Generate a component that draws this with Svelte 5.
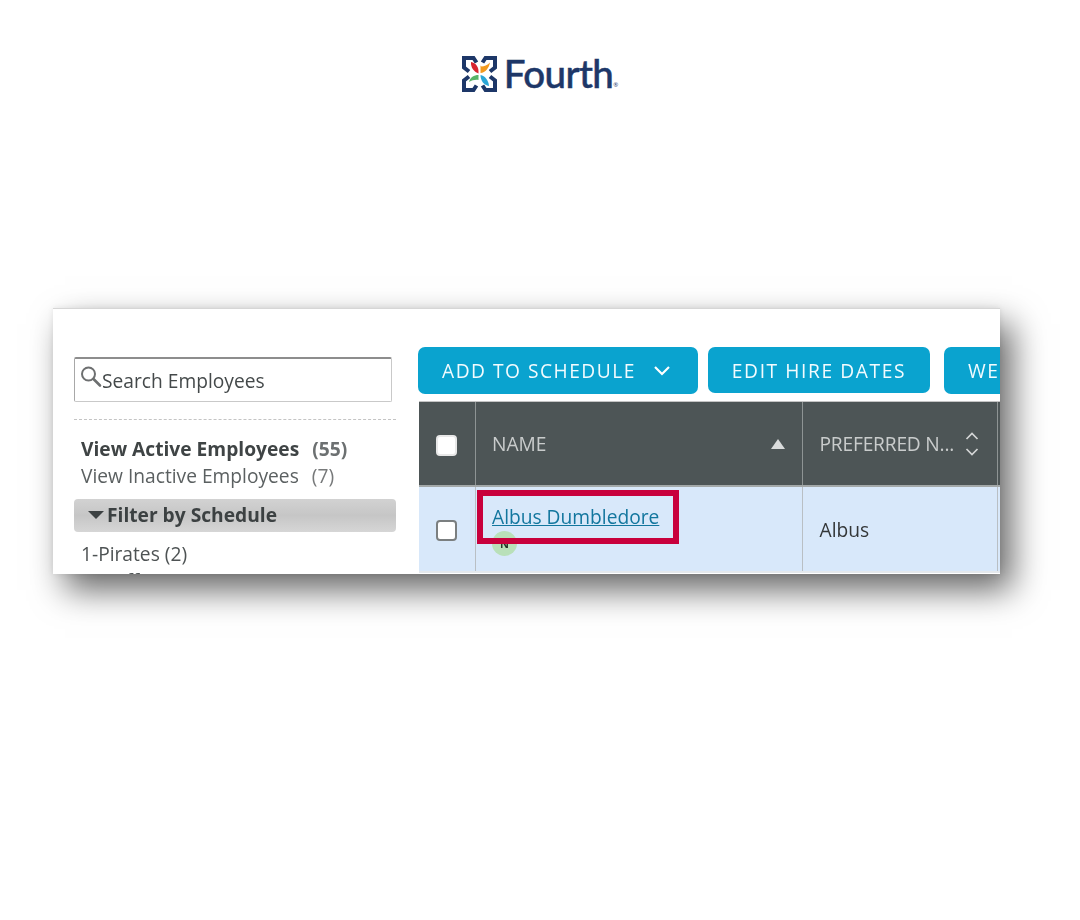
<script>
  const sideLinks = [
    { label: 'View Active Employees', count: 55, active: true },
    { label: 'View Inactive Employees', count: 7, active: false }
  ];
</script>

<div class="page">
  <header class="brand">
    <svg class="mark" width="35" height="36" viewBox="0 0 35 36" aria-hidden="true">
      <g fill="none" stroke="#1d3768" stroke-width="4" stroke-linejoin="miter" stroke-linecap="butt">
        <path d="M14.500 6.500 L11.500 2 H2 V11.500 L7 15.500" />
        <path d="M20.500 6.500 L23.500 2 H33 V11.500 L28 15.500" />
        <path d="M14.500 29.500 L11.500 34 H2 V24.500 L7 20.500" />
        <path d="M20.500 29.500 L23.500 34 H33 V24.500 L28 20.500" />
      </g>
      <path d="M9 6 C14 7 17 11 16.500 17.500 C12.500 16 8.500 12 9 6Z" fill="#d8232f" />
      <path d="M28 6.500 C27 12 23.500 16.500 18.500 17 L18.500 9.500 L19.500 10.500 C22 10.500 25.500 9 28 6.500Z" fill="#f39a1e" />
      <path d="M7 26 C8 21.500 12 19 16.500 19 L16.500 24 C13 23.500 10 24.500 7 26Z" fill="#58b368" />
      <path d="M27 30 C22 29 18.500 25 18.500 19 C23 20 26.500 24 27 30Z" fill="#2aa6d6" />
    </svg>
    <span class="word">Fourth</span><span class="reg">®</span>
  </header>

  <section class="shot">
    <div class="inner">
      <aside class="side">
        <div class="search">
          <svg width="24" height="24" viewBox="0 0 24 24" aria-hidden="true">
            <circle cx="9.500" cy="9" r="6.500" fill="none" stroke="#6d6f70" stroke-width="2" />
            <path d="M14.500 14 L21 20.500" stroke="#6d6f70" stroke-width="2.600" stroke-linecap="round" />
          </svg>
          <span>Search Employees</span>
        </div>
        <div class="links">
          {#each sideLinks as link}
            <div class="link" class:active={link.active}>
              <span class="name">{link.label}</span><span class="count">({link.count})</span>
            </div>
          {/each}
        </div>
        <div class="filter">
          <span class="caret"></span>
          <span>Filter by Schedule</span>
        </div>
        <div class="groups">
          <div>1-Pirates (2)</div>
          <div>2-Staff (3)</div>
        </div>
      </aside>

      <div class="main">
        <div class="toolbar">
          <button class="add">
            ADD TO SCHEDULE
            <svg width="18" height="11" viewBox="0 0 18 11" aria-hidden="true">
              <path d="M2 2 L9 9 L16 2" fill="none" stroke="#fff" stroke-width="2.200" />
            </svg>
          </button>
          <button class="edit">EDIT HIRE DATES</button>
          <button class="web">WEB ACCESS</button>
        </div>

        <div class="table">
          <div class="row head">
            <div class="cell check"><span class="box white"></span></div>
            <div class="cell name">
              <span>NAME</span>
              <svg width="14" height="10" viewBox="0 0 14 10" aria-hidden="true"><path d="M7 0 L14 10 H0Z" fill="#d9dbdb" /></svg>
            </div>
            <div class="cell pref">
              <span>PREFERRED N...</span>
              <svg width="14" height="24" viewBox="0 0 14 24" aria-hidden="true">
                <path d="M1.500 7 L7 1.500 L12.500 7 M1.500 17 L7 22.500 L12.500 17" fill="none" stroke="#d4d6d6" stroke-width="1.700" />
              </svg>
            </div>
            <div class="cell rest"></div>
          </div>
          <div class="row body">
            <div class="cell check"><span class="box"></span></div>
            <div class="cell name">
              <a href="#albus">Albus Dumbledore</a>
              <span class="avatar">N</span>
              <span class="highlight"></span>
            </div>
            <div class="cell pref">Albus</div>
            <div class="cell rest"></div>
          </div>
        </div>
      </div>
    </div>
  </section>
</div>

<style>
  :global(body) {
    background: #fff;
  }

  .page {
    width: 1080px;
    height: 920px;
    font-family: "Open Sans", "Liberation Sans", sans-serif;
    color: #4a4f50;
    overflow: hidden;
  }

  .brand {
    display: flex;
    justify-content: center;
    align-items: flex-start;
    height: 308px;
    padding-top: 56px;
    box-sizing: border-box;
  }

  .mark {
    margin-right: 7px;
    filter: blur(0.3px);
  }

  .word {
    font-family: "Lato", "Open Sans", sans-serif;
    font-size: 38.500px;
    line-height: 34px;
    font-weight: 500;
    color: #1d3768;
    letter-spacing: -0.6px;
    -webkit-text-stroke: 0.5px #1d3768;
  }

  .reg {
    font-size: 6px;
    line-height: 6px;
    margin-top: 26px;
    color: #1d3768;
  }

  .shot {
    width: 947px;
    height: 266px;
    margin-left: 53px;
    box-shadow: 12px 16px 32px rgba(0, 0, 0, 0.6), 0 0 6px rgba(0, 0, 0, 0.08);
    background: #fff;
  }

  .inner {
    height: 266px;
    overflow: hidden;
    display: flex;
    box-sizing: border-box;
    border-top: 1px solid #d6d6d6;
    filter: blur(0.3px);
  }

  .side {
    width: 322px;
    margin-left: 21px;
    flex: none;
    padding-top: 48px;
  }

  .search {
    width: 318px;
    height: 45px;
    box-sizing: border-box;
    display: flex;
    align-items: center;
    padding: 0 0 0 4px;
    border: 1px solid #c9c9c9;
    border-top: 2px solid #8d8d8d;
    border-left-color: #a8a8a8;
    border-radius: 2px;
    font-size: 19.200px;
    color: #44494a;
  }

  .search svg {
    margin-top: -6px;
  }

  .search span {
    margin-left: -1px;
  }

  .links {
    margin-top: 17px;
    border-top: 1px dashed #c4c4c4;
    padding: 15px 0 0 7px;
    margin-bottom: 10px;
  }

  .link {
    font-size: 19.200px;
    line-height: 27px;
    color: #5b6061;
  }

  .link .count {
    margin-left: 13px;
    color: #77797a;
  }

  .link.active {
    font-weight: 700;
    color: #3f4445;
  }

  .link.active .count {
    color: #6c7071;
  }

  .filter {
    height: 33px;
    box-sizing: border-box;
    padding: 0 0 2px 14px;
    border-radius: 4px;
    background: linear-gradient(#d2d2d2, #c6c6c6 50%, #d6d6d6);
    display: flex;
    align-items: center;
    font-size: 19.200px;
    font-weight: 700;
    color: #3c4142;
  }

  .caret {
    width: 0;
    height: 0;
    border-left: 8px solid transparent;
    border-right: 8px solid transparent;
    border-top: 8px solid #3c4142;
    margin-right: 3px;
  }

  .groups {
    padding: 8px 0 0 7px;
    font-size: 19.200px;
    line-height: 27px;
    color: #4e5354;
  }

  .main {
    flex: none;
    width: 604px;
    margin-left: 23px;
    padding-top: 38px;
  }

  .toolbar {
    display: flex;
    align-items: flex-start;
    height: 54px;
  }

  button {
    height: 47px;
    flex: none;
    padding: 0;
    border: none;
    border-radius: 7px;
    background: #0aa3cf;
    color: #f2fbfe;
    font-family: inherit;
    font-size: 19.200px;
    letter-spacing: 1.600px;
    display: flex;
    align-items: center;
    justify-content: center;
  }

  .add {
    width: 280px;
    gap: 17px;
    margin-left: -1px;
    margin-right: 10px;
    letter-spacing: 1.500px;
    padding-right: 3px;
  }

  .edit {
    width: 222px;
    height: 46px;
    margin-right: 14px;
  }

  .web {
    width: 200px;
    justify-content: flex-start;
    padding-left: 24px;
  }

  .table {
    width: 581px;
    border-top: 1px solid #c4c4c4;
  }

  .row {
    display: grid;
    grid-template-columns: 57px 327px 195px 1fr;
  }

  .head {
    height: 85px;
    background: #4d5556;
    color: #c9cccc;
    font-size: 19.200px;
    border-bottom: 2px solid #a3a8a8;
    box-sizing: border-box;
  }

  .body {
    height: 86px;
    background: #d8e8fa;
    color: #333637;
    font-size: 19.200px;
    border-bottom: 2px solid #e4e8ec;
    box-sizing: border-box;
  }

  .cell {
    display: flex;
    align-items: center;
    box-sizing: border-box;
    border-right: 1px solid #8e9494;
    padding: 0 17px 0 16.500px;
  }

  .body .cell {
    border-right-color: #b9bfc4;
  }

  .cell.name {
    padding-left: 16px;
  }

  .cell.rest {
    border-right: none;
    padding: 0;
  }

  .check {
    justify-content: center;
    padding: 0 1px 0 0;
  }

  .head .check {
    padding-top: 3px;
  }

  .body .check {
    padding-top: 2px;
  }

  .box {
    width: 21px;
    height: 21px;
    box-sizing: border-box;
    border: 2px solid #7b7f80;
    border-radius: 4px;
    background: #fff;
  }

  .box.white {
    border-color: #e8e8e8;
  }

  .head .name {
    justify-content: space-between;
    padding-right: 17px;
  }

  .head .pref {
    justify-content: space-between;
    padding-right: 18px;
    white-space: nowrap;
    letter-spacing: -0.200px;
  }

  .body .name {
    position: relative;
    flex-direction: column;
    align-items: flex-start;
    justify-content: flex-start;
    padding-top: 16px;
  }

  a {
    color: #12769e;
    line-height: 27px;
  }

  .avatar {
    width: 25px;
    height: 25px;
    margin-top: 1px;
    border-radius: 50%;
    background: #b9e0b9;
    color: #24382a;
    font-size: 11px;
    font-weight: 700;
    text-align: center;
    line-height: 25px;
  }

  /* annotation drawn over the row */
  .highlight {
    position: absolute;
    left: 1px;
    top: 3px;
    width: 202px;
    height: 54px;
    box-sizing: border-box;
    border: 6px solid #c8003c;
  }
</style>
